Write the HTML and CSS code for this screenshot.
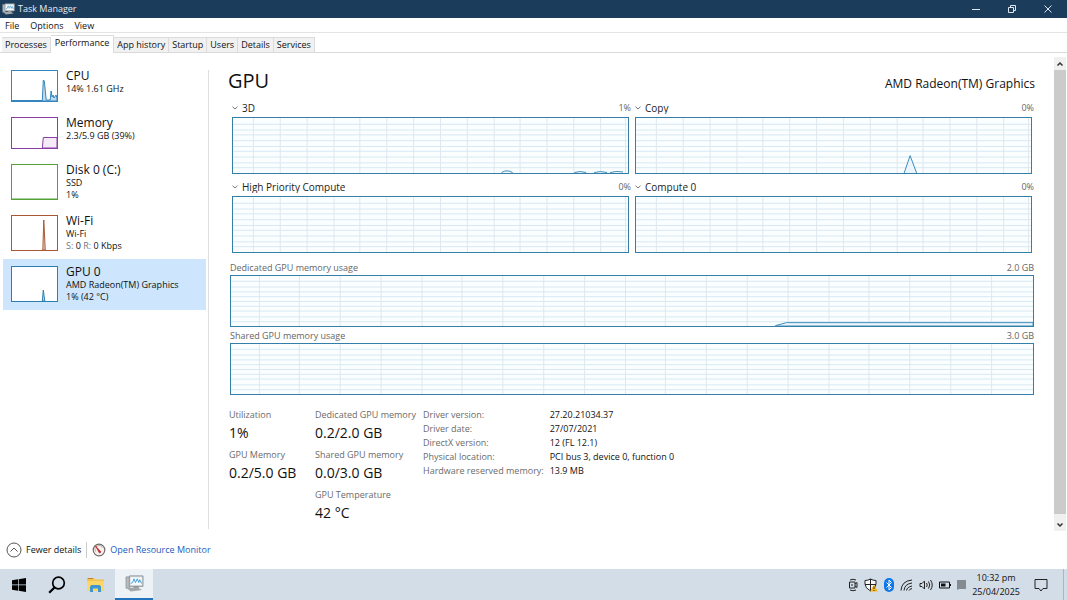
FILE: index.html
```html
<!DOCTYPE html>
<html lang="en">
<head>
    <meta charset="UTF-8">
    <meta name="viewport" content="width=device-width, initial-scale=1.0">
    <title>Task Manager</title>
    <link rel="stylesheet" href="styles.css">
</head>
<body>
    <!-- Grid lines shared by the charts -->
    <svg class="defs" aria-hidden="true">
        <symbol id="grid-small" viewBox="0 0 397 57" preserveAspectRatio="none">
            <path class="grid-h" d="M0 6.5H397M0 12.5H397M0 17.5H397M0 23.5H397M0 29.5H397M0 34.5H397M0 40.5H397M0 46.5H397M0 51.5H397"/>
            <path class="grid-v" d="M20.5 0V57M47.5 0V57M74.5 0V57M101.5 0V57M127.5 0V57M154.5 0V57M181.5 0V57M208.5 0V57M235.5 0V57M262.5 0V57M288.5 0V57M315.5 0V57M342.5 0V57M369.5 0V57M394.5 0V57"/>
        </symbol>
        <symbol id="grid-large" viewBox="0 0 804 52" preserveAspectRatio="none">
            <path class="grid-h" d="M0 5.5H804M0 11.5H804M0 16.5H804M0 21.5H804M0 26.5H804M0 31.5H804M0 36.5H804M0 42.5H804M0 47.5H804"/>
            <path class="grid-v" d="M28.5 0V52M68.5 0V52M109.5 0V52M150.5 0V52M191.5 0V52M231.5 0V52M272.5 0V52M313.5 0V52M354.5 0V52M395.5 0V52M435.5 0V52M476.5 0V52M517.5 0V52M558.5 0V52M599.5 0V52M639.5 0V52M680.5 0V52M721.5 0V52M762.5 0V52"/>
        </symbol>
        <symbol id="chevron" viewBox="0 0 6 4">
            <path d="M.5 .7L3 3L5.500 .7" fill="none" stroke="#777"/>
        </symbol>
        <symbol id="monitor" viewBox="0 0 20 18">
            <path d="M1 2h4v12H1z" fill="#b9bcbe" stroke="#85898c" stroke-width=".7"/>
            <path d="M4.500 1h14.500v11H4.500z" fill="#d9e0e4" stroke="#8b8f92"/>
            <path d="M6 2.500h11.500v8H6z" fill="#f6fcff"/>
            <path d="M6 9l2-1 1.500-4 1.500 4 2-4 1.500 4 1-3 2 4" fill="none" stroke="#3f9bd0"/>
            <path d="M10 12h4l1 3H8z" fill="#8d9193"/>
            <path d="M2 14l11-1 5 3-12 1.500z" fill="#a4a7a9"/>
        </symbol>
    </svg>

    <header class="titlebar">
        <svg class="app-icon"><use href="#monitor"/></svg>
        <span class="title">Task Manager</span>
        <button class="win-btn" aria-label="Minimize"><svg viewBox="0 0 10 10"><path d="M1 5.500h8"/></svg></button>
        <button class="win-btn" aria-label="Restore"><svg viewBox="0 0 10 10"><path d="M1.500 3.500h5v5h-5zM3.500 3V1.500h5v5H7"/></svg></button>
        <button class="win-btn" aria-label="Close"><svg viewBox="0 0 10 10"><path d="M1.500 1.500l7 7M8.500 1.500l-7 7"/></svg></button>
    </header>

    <nav class="menu">
        <button>File</button>
        <button>Options</button>
        <button>View</button>
    </nav>

    <div class="tabs" role="tablist">
        <button role="tab">Processes</button>
        <button role="tab" class="active" aria-selected="true">Performance</button>
        <button role="tab">App history</button>
        <button role="tab">Startup</button>
        <button role="tab">Users</button>
        <button role="tab">Details</button>
        <button role="tab">Services</button>
    </div>

    <div class="content">
        <aside class="sidebar">
            <button class="item">
                <svg class="thumb short cpu" viewBox="0 0 46 30" preserveAspectRatio="none"><path d="M0 29.500H31L32 9L33 10L35 29H39L40 20L41 26L42 24L43 27L45 24L46 27V30H0z"/></svg>
                <span class="info"><span class="name">CPU</span><span class="sub">14% 1.61 GHz</span></span>
            </button>
            <button class="item">
                <svg class="thumb short memory" viewBox="0 0 46 30" preserveAspectRatio="none"><path d="M31 30L32 19.500H46V30z"/></svg>
                <span class="info"><span class="name">Memory</span><span class="sub">2.3/5.9 GB (39%)</span></span>
            </button>
            <button class="item">
                <svg class="thumb disk" viewBox="0 0 46 34" preserveAspectRatio="none"><path d="M0 34H46"/></svg>
                <span class="info"><span class="name">Disk 0 (C:)</span><span class="sub">SSD</span><span class="sub">1%</span></span>
            </button>
            <button class="item">
                <svg class="thumb wifi" viewBox="0 0 46 34" preserveAspectRatio="none"><path d="M31.500 34L32.500 4L34 34z"/></svg>
                <span class="info"><span class="name">Wi-Fi</span><span class="sub">Wi-Fi</span><span class="sub"><i>S:</i> 0 <i>R:</i> 0 Kbps</span></span>
            </button>
            <button class="item selected">
                <svg class="thumb gpu" viewBox="0 0 46 34" preserveAspectRatio="none"><path d="M31 34L32 23L33.500 34z"/></svg>
                <span class="info"><span class="name">GPU 0</span><span class="sub">AMD Radeon(TM) Graphics</span><span class="sub">1% (42 °C)</span></span>
            </button>
        </aside>

        <main class="panel">
            <div class="heading">
                <h1>GPU</h1>
                <h2>AMD Radeon(TM) Graphics</h2>
            </div>

            <div class="engines">
                <section>
                    <div class="chart-head">
                        <label><svg class="chevron"><use href="#chevron"/></svg><select aria-label="Engine 1"><option>3D</option></select></label>
                        <span>1%</span>
                    </div>
                    <svg class="chart small" viewBox="0 0 397 57" preserveAspectRatio="none">
                        <use href="#grid-small"/>
                        <path class="line" d="M270 56.500Q275 53 281 56.500M343 56.500Q349 54.500 355 56.500M363 56.500Q369 54.500 376 56.500M379 56.500Q386 54.500 392 56"/>
                    </svg>
                </section>
                <section>
                    <div class="chart-head">
                        <label><svg class="chevron"><use href="#chevron"/></svg><select aria-label="Engine 2"><option>Copy</option></select></label>
                        <span>0%</span>
                    </div>
                    <svg class="chart small" viewBox="0 0 397 57" preserveAspectRatio="none">
                        <use href="#grid-small"/>
                        <path class="line" d="M269.500 57L275.500 39L282 57"/>
                    </svg>
                </section>
                <section>
                    <div class="chart-head">
                        <label><svg class="chevron"><use href="#chevron"/></svg><select aria-label="Engine 3"><option>High Priority Compute</option></select></label>
                        <span>0%</span>
                    </div>
                    <svg class="chart small" viewBox="0 0 397 57" preserveAspectRatio="none">
                        <use href="#grid-small"/>
                    </svg>
                </section>
                <section>
                    <div class="chart-head">
                        <label><svg class="chevron"><use href="#chevron"/></svg><select aria-label="Engine 4"><option>Compute 0</option></select></label>
                        <span>0%</span>
                    </div>
                    <svg class="chart small" viewBox="0 0 397 57" preserveAspectRatio="none">
                        <use href="#grid-small"/>
                    </svg>
                </section>
            </div>

            <div class="memory-charts">
                <section>
                    <div class="chart-title"><span>Dedicated GPU memory usage</span><span>2.0 GB</span></div>
                    <svg class="chart large" viewBox="0 0 804 52" preserveAspectRatio="none">
                        <use href="#grid-large"/>
                        <path class="line" d="M546 51.500L557 48.500H804V52H546z"/>
                    </svg>
                </section>
                <section>
                    <div class="chart-title"><span>Shared GPU memory usage</span><span>3.0 GB</span></div>
                    <svg class="chart large" viewBox="0 0 804 52" preserveAspectRatio="none">
                        <use href="#grid-large"/>
                    </svg>
                </section>
            </div>

            <div class="stats">
                <dl class="figures">
                    <dt>Utilization</dt><dd>1%</dd>
                    <dt>GPU Memory</dt><dd>0.2/5.0 GB</dd>
                </dl>
                <dl class="figures wide">
                    <dt>Dedicated GPU memory</dt><dd>0.2/2.0 GB</dd>
                    <dt>Shared GPU memory</dt><dd>0.0/3.0 GB</dd>
                    <dt>GPU Temperature</dt><dd>42 °C</dd>
                </dl>
                <table class="driver">
                    <tr><th scope="row">Driver version:</th><td>27.20.21034.37</td></tr>
                    <tr><th scope="row">Driver date:</th><td>27/07/2021</td></tr>
                    <tr><th scope="row">DirectX version:</th><td>12 (FL 12.1)</td></tr>
                    <tr><th scope="row">Physical location:</th><td>PCI bus 3, device 0, function 0</td></tr>
                    <tr><th scope="row">Hardware reserved memory:</th><td>13.9 MB</td></tr>
                </table>
            </div>
        </main>

        <div class="scrollbar">
            <button aria-label="Scroll up"><svg viewBox="0 0 8 6"><path d="M1.500 4.500L4 2L6.500 4.500"/></svg></button>
            <div class="track"><div class="scroll-thumb"></div></div>
            <button aria-label="Scroll down"><svg viewBox="0 0 8 6"><path d="M1.500 1.500L4 4L6.500 1.500"/></svg></button>
        </div>
    </div>

    <footer class="footer">
        <button class="fewer">
            <svg viewBox="0 0 16 16"><circle cx="8" cy="8" r="7"/><path d="M4.500 9.500L8 6l3.500 3.500"/></svg>
            Fewer details
        </button>
        <a class="resource" href="#">
            <svg viewBox="0 0 14 14">
                <circle cx="7" cy="7" r="5.800" fill="#f4f1ee" stroke="#706a68" stroke-width="1.200"/>
                <path d="M3.500 8.500a4 4 0 0 1 7-4" fill="none" stroke="#b9b3b0"/>
                <path d="M3.500 3l5.500 6-1.500 1z" fill="#c32a2c" stroke="#c32a2c" stroke-width=".8"/>
            </svg>
            <span>Open Resource Monitor</span>
        </a>
    </footer>

    <div class="taskbar">
        <button class="task" aria-label="Start">
            <svg width="14" height="14" viewBox="0 0 14 14"><path d="M0 2.200L6 1.300V6.600H0zM6.700 1.200L14 0V6.600H6.700zM0 7.300H6V12.700L0 11.800zM6.700 7.300H14V14L6.700 12.800z"/></svg>
        </button>
        <button class="task" aria-label="Search">
            <svg width="18" height="18" viewBox="0 0 18 18"><circle cx="10.500" cy="7" r="5.800" fill="none" stroke="#000" stroke-width="1.700"/><path d="M6.500 11.500L1.200 16.800" stroke="#000" stroke-width="2.300"/></svg>
        </button>
        <button class="task" aria-label="File Explorer">
            <svg width="17" height="16" viewBox="0 0 17 16"><path d="M0 1h7l1 1.500h9V14H0z" fill="#f4c34b"/><path d="M0 4h17v10H0z" fill="#fcd768"/><path d="M1 1h5v1H1z" fill="#bd842c"/><path d="M3 15V9.500L4.500 8h8L14 9.500V15h-3v-3.500H6V15z" fill="#3d96d0"/></svg>
        </button>
        <button class="task running" aria-label="Task Manager">
            <svg width="19" height="17"><use href="#monitor"/></svg>
        </button>
        <div class="tray">
            <svg width="10" height="14" viewBox="0 0 10 14"><path d="M1.500 4h5.500v6H1.500zM7 6l2-1.500v5L7 8M2 2q3-1.500 6 0M2 12q3 1.500 6 0M3 7h2" fill="none" stroke="#222"/></svg>
            <svg width="14" height="14" viewBox="0 0 14 14"><path d="M6.500 1Q9 2.500 12 2.500V6q0 4-5.500 7Q1 10 1 6V2.500Q4 2.500 6.500 1z" fill="#f8f8f8" stroke="#222"/><path d="M6.500 1v12M1 6.500h11" stroke="#222"/><path d="M10 6.500L14 13.500H6z" fill="#f6b51e"/><path d="M10 8.500v2.500M10 12v1" stroke="#222" stroke-width=".9"/></svg>
            <svg width="10" height="14" viewBox="0 0 10 14"><rect width="10" height="14" rx="5" fill="#0f78e8"/><path d="M2.500 4.500l5 5L5 12V2l2.500 2.500-5 5" fill="none" stroke="#fff"/></svg>
            <svg width="13" height="12" viewBox="0 0 13 12"><path d="M1 11.500Q1.500 2 12 1M4 11.500Q4.500 5 12 4M6.500 11.500Q7 8 12 7M9 11.500Q9.500 10 12 9.500" fill="none" stroke="#222"/></svg>
            <svg width="14" height="12" viewBox="0 0 14 12"><path d="M1 4.500h2L5.500 2v8L3 7.500H1zM7.500 4Q9 6 7.500 8M9.500 2.500Q12 6 9.500 9.500M11.500 1Q15 6 11.500 11" fill="none" stroke="#222"/></svg>
            <svg width="12" height="8" viewBox="0 0 12 8"><path d="M.5 1h10v6H.5z" fill="none" stroke="#111"/><path d="M2 2.500h4.500v3H2zM11 3h1v2h-1z" fill="#111"/></svg>
            <svg width="9" height="10" viewBox="0 0 9 10"><path d="M0 0h9v9H2l-2 1z" fill="#848c92"/></svg>
            <div class="clock"><span>10:32 pm</span><span>25/04/2025</span></div>
            <button class="notify" aria-label="Notifications">
                <svg width="14" height="14" viewBox="0 0 14 14"><path d="M1 1.500h12v9H9L7 13 5 10.500H1z" fill="none" stroke="#222"/></svg>
            </button>
        </div>
    </div>
</body>
</html>
```

FILE: styles.css
```css
* {
    box-sizing: border-box;
}

body {
    margin: 0;
    height: 100vh;
    display: flex;
    flex-direction: column;
    overflow: hidden;
    background: #fff;
    color: #111;
    font-family: "Open Sans", "Noto Sans", sans-serif;
    font-size: 9px;
    line-height: 12px;
}

button, select {
    font: inherit;
    color: inherit;
    background: none;
    border: 0;
    margin: 0;
    padding: 0;
}

svg {
    flex: none;
}

.defs {
    position: absolute;
    width: 0;
    height: 0;
}

/* Title bar */
.titlebar {
    display: flex;
    align-items: center;
    height: 18px;
    background: #1b3c5b;
    color: #e8edf2;
    padding: 0 1px 0 2px;
}

.app-icon {
    width: 13px;
    height: 12px;
    margin-right: 3px;
}

.title {
    flex: 1;
}

.win-btn {
    width: 36px;
    height: 16px;
}

.win-btn svg {
    width: 10px;
    height: 10px;
    display: block;
    margin: 0 auto;
    fill: none;
    stroke: #dfe6ed;
}

/* Menu and tabs */
.menu {
    display: flex;
    gap: 11px;
    height: 15px;
    padding: 1px 5px 0;
    border-bottom: 1px solid #e4e4e4;
}

.tabs {
    display: flex;
    align-items: flex-end;
    height: 20px;
    padding-left: 2px;
    border-bottom: 1px solid #dadada;
}

.tabs button {
    height: 15px;
    padding: 0 3px;
    background: #f1f1f1;
    border: 1px solid #dcdcdc;
    border-left-width: 0;
    border-bottom: 0;
}

.tabs .active {
    height: 18px;
    margin-bottom: -1px;
    padding: 0 4px 3px;
    background: #fff;
}

.content {
    flex: 1;
    min-height: 0;
    display: flex;
}

/* Left list */
.sidebar {
    width: 209px;
    flex: none;
    padding: 10px 3px 0;
    margin-bottom: 2px;
    background: linear-gradient(#dedede, #dedede) right 17px / 1px no-repeat;
}

.item {
    display: flex;
    align-items: flex-start;
    gap: 8px;
    width: 100%;
    min-height: 47px;
    padding: 7px 8px;
    text-align: left;
}

.item.selected {
    background: #cde6fd;
}

.thumb {
    width: 47px;
    height: 36px;
    border: 1px solid;
    background: #fff;
    overflow: hidden;
}

.thumb.short {
    height: 32px;
}

.thumb path {
    stroke: currentColor;
    fill: currentColor;
    fill-opacity: .3;
}

.cpu { color: #3485bd; }
.memory { color: #8b3da6; }
.memory path { fill-opacity: .1; }
.disk { color: #54a13a; }
.wifi { color: #aa5833; }
.gpu { color: #2e7eae; }

.info {
    display: flex;
    flex-direction: column;
}

.name {
    margin-bottom: 2px;
    font-size: 12px;
    line-height: 11px;
}

.sub i {
    font-style: normal;
    color: #777;
}

/* Charts */
.panel {
    flex: 1;
    min-width: 0;
    padding: 12px 19px 0;
}

.heading {
    display: flex;
    justify-content: space-between;
    align-items: baseline;
    height: 36px;
}

h1, h2 {
    margin: 0;
    font-weight: 400;
}

h1 {
    font-size: 20px;
    line-height: 32px;
}

h2 {
    font-size: 12px;
    line-height: 16px;
}

.engines {
    display: grid;
    grid-template-columns: 1fr 1fr;
    column-gap: 6px;
    padding: 0 3px 0 4px;
}

.chart-head, .chart-head label {
    display: flex;
    align-items: center;
    color: #666;
}

.chart-head {
    height: 16px;
    justify-content: space-between;
    padding-bottom: 3px;
}

.chart-head span {
    margin-right: -2px;
}

.chevron {
    width: 6px;
    height: 4px;
    margin-right: 4px;
}

select {
    appearance: none;
    color: #222;
    font-size: 10px;
}

.engines section {
    padding-bottom: 6px;
}

.chart {
    display: block;
    width: 100%;
    border: 1px solid #347ea8;
    background: #fbfeff;
}

.chart.small {
    height: 57px;
}

.chart.large {
    height: 52px;
}

.grid-h, .grid-v {
    fill: none;
    stroke: #d6e8f1;
}

.grid-v {
    stroke: #dde7ee;
}

.line {
    fill: #edf6fc;
    stroke: #398bbd;
}

.memory-charts {
    padding: 3px 1px 0 2px;
}

.memory-charts section {
    padding-bottom: 3px;
}

.chart-title {
    display: flex;
    justify-content: space-between;
    height: 13px;
    color: #666;
}

/* Figures below the charts */
.stats {
    display: flex;
    padding: 11px 1px 0;
}

.figures {
    margin: 0;
    width: 86px;
    white-space: nowrap;
}

.figures.wide {
    width: 108px;
}

dt, .driver th {
    color: #6b6b6b;
    font-weight: 400;
}

dt {
    height: 16px;
}

dd {
    margin: 0;
    height: 24px;
    font-size: 14px;
    line-height: 16px;
}

.driver {
    border-collapse: collapse;
    align-self: flex-start;
    white-space: nowrap;
}

.driver th, .driver td {
    height: 14px;
    padding: 0 6px 2px 0;
    text-align: left;
}

/* Scroll bar */
.scrollbar {
    display: flex;
    flex-direction: column;
    width: 12px;
    padding-top: 4px;
    margin-right: 1px;
}

.scrollbar button {
    height: 13px;
    background: #f0f0f0;
}

.scrollbar svg {
    display: block;
    width: 8px;
    height: 6px;
    margin: 0 auto;
    fill: none;
    stroke: #333;
    stroke-width: 1.5;
}

.track {
    flex: 1;
    background: #f0f0f0;
}

.scroll-thumb {
    height: 99%;
    background: #cbcbcb;
}

/* Footer */
.footer {
    display: flex;
    align-items: center;
    height: 38px;
    padding-left: 6px;
}

.fewer, .resource {
    display: flex;
    align-items: center;
    gap: 4px;
}

.fewer {
    padding-right: 5px;
    border-right: 1px solid #ccc;
}

.fewer svg {
    width: 16px;
    height: 16px;
    fill: none;
    stroke: #555;
}

.resource {
    margin-left: 5px;
    color: #1d5bbd;
    text-decoration: none;
}

.resource svg {
    width: 14px;
    height: 14px;
}

/* Taskbar */
.taskbar {
    display: flex;
    height: 31px;
    background: #d2dde8;
}

.task {
    display: flex;
    align-items: center;
    justify-content: center;
    width: 38px;
}

.task.running {
    margin-left: 1px;
    background: #edf2f7;
    border-bottom: 2px solid #2173bd;
}

.tray {
    margin-left: auto;
    display: flex;
    align-items: center;
    gap: 6px;
}

.clock {
    display: flex;
    flex-direction: column;
    align-items: center;
    line-height: 14px;
}

.notify {
    display: flex;
    align-items: center;
    justify-content: center;
    width: 38px;
    height: 100%;
    margin-right: 3px;
    padding-right: 8px;
    border-right: 1px solid #aab6c2;
}
```
